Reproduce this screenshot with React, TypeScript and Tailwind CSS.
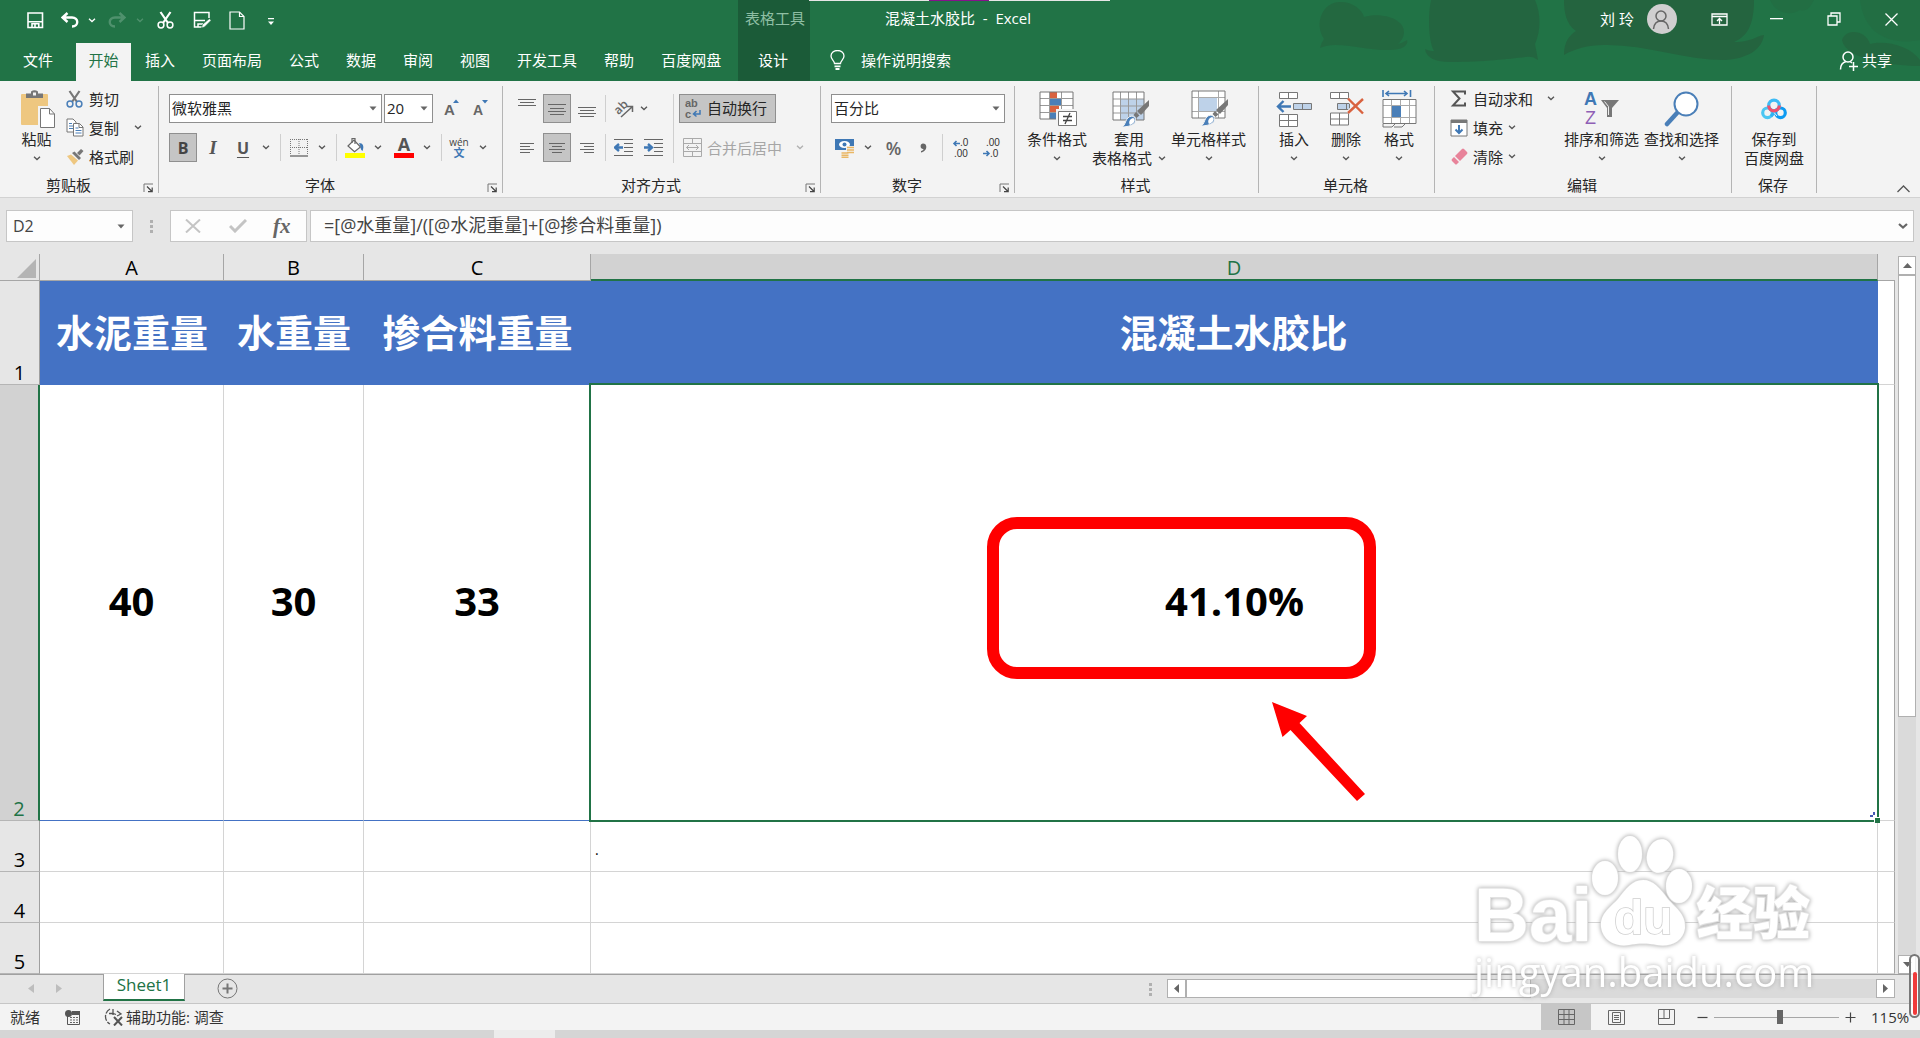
import React from "react";
import type { ReactNode } from "react";

/* ---------- small shared pieces ---------- */

function Chevron({ className = "text-[#555]" }: { className?: string }) {
  return (
    <svg width="8" height="5" viewBox="0 0 8 5" className={`shrink-0 ${className}`} aria-hidden="true">
      <path d="M1 .8 4 3.6 7 .8" fill="none" stroke="currentColor" strokeWidth="1.3" />
    </svg>
  );
}

function Caret({ className = "" }: { className?: string }) {
  return (
    <svg width="8" height="5" viewBox="0 0 8 5" className={`pointer-events-none shrink-0 text-[#666] ${className}`} aria-hidden="true">
      <path d="M.5 .5h7L4 4.5z" fill="currentColor" />
    </svg>
  );
}

function Sep({ className = "" }: { className?: string }) {
  return <span className={`h-[27px] w-px shrink-0 bg-[#cfcfcf] ${className}`} />;
}

function Launcher() {
  return (
    <button type="button" aria-label="更多选项" className="mr-1 self-end">
      <svg width="11" height="10" viewBox="0 0 11 10" aria-hidden="true">
        <path d="M1 9V1h9" fill="none" stroke="#777" />
        <path d="M4 3.5 8.5 8M5 8.7h4.2V4.5" fill="none" stroke="#444" strokeWidth="1.2" />
      </svg>
    </button>
  );
}

function Group({ label, width, launcher, children }: { label: string; width: string; launcher?: boolean; children: ReactNode }) {
  return (
    <section aria-label={label} className={`flex shrink-0 flex-col border-r border-[#b4b4b4] ${width}`}>
      <div className="h-[91px]">{children}</div>
      <div className="flex h-4 items-center">
        <span className={`flex-1 text-center leading-4 ${launcher ? "pr-[6px]" : "pr-[2px]"}`}>{label}</span>
        {launcher && <Launcher />}
      </div>
    </section>
  );
}

function BigButton({ icon, label, second, className = "", chevron = true }: { icon: ReactNode; label: string; second?: string; className?: string; chevron?: boolean }) {
  return (
    <button type="button" className={`flex flex-col items-center ${className}`}>
      <span className="flex h-[42px] items-center justify-center">{icon}</span>
      <span className="h-[19px] leading-[19px]">{label}</span>
      <span className="flex h-[19px] items-center gap-[6px] leading-[19px]">
        {second}
        {chevron && <Chevron />}
      </span>
    </button>
  );
}

function IconButton({ label, children, className = "" }: { label: string; children: ReactNode; className?: string }) {
  return (
    <button type="button" aria-label={label} className={`flex shrink-0 items-center justify-center ${className}`}>
      {children}
    </button>
  );
}

/* ---------- icons ---------- */

const SaveIcon = () => (
  <svg width="17" height="17" viewBox="0 0 17 17" fill="none" stroke="#fff" strokeWidth="1.600">
    <path d="M1 1h14.500v14.500H1zM1 9.800h14.500" />
    <path d="M5 15.500v-3.700h6.800v3.700M8 12v3" />
  </svg>
);

const UndoIcon = () => (
  <svg width="18" height="16" viewBox="0 0 18 16" fill="none" stroke="#fff" strokeWidth="2.400">
    <path d="M6.500 1 1.600 5.500l4.900 4.500M1.800 5.500h9.200c7 0 7 9 0 9" />
  </svg>
);

const RedoIcon = () => (
  <svg width="18" height="16" viewBox="0 0 18 16" fill="none" stroke="#4f916d" strokeWidth="2.400">
    <path d="m11.500 1 4.900 4.500-4.900 4.500M16.200 5.500H7c-7 0-7 9 0 9" />
  </svg>
);

const Scissors = ({ blade, ring }: { blade: string; ring: string }) => (
  <svg width="17" height="18" viewBox="0 0 17 18" fill="none" className="shrink-0">
    <path d="M3.500 1 11 12M13.500 1 6 12" stroke={blade} strokeWidth="2.200" />
    <circle cx="4" cy="14" r="2.900" stroke={ring} strokeWidth="1.500" />
    <circle cx="13" cy="14" r="2.900" stroke={ring} strokeWidth="1.500" />
  </svg>
);

const SaveEditIcon = () => (
  <svg width="19" height="19" viewBox="0 0 19 19" fill="none" stroke="#fff" strokeWidth="1.500">
    <path d="M9 16H1.500V1.500H16V7M2 9.500h10M5 16v-3h5" />
    <path d="m8.500 17 1-3.500 7-6 1.500 2-6.500 6.500z" fill="#fff" stroke="#217346" strokeWidth=".6" />
  </svg>
);

const PageIcon = () => (
  <svg width="16" height="19" viewBox="0 0 16 19" fill="none" stroke="#fff" strokeWidth="1.200">
    <path d="M1 1h9.500l4.500 4.500V18H1z" />
    <path d="M10.500 1v4.500H15" />
  </svg>
);

const PasteIcon = () => (
  <svg width="35" height="39" viewBox="0 0 35 39" fill="none">
    <rect y="4" width="27" height="31" rx="1" fill="#eec780" />
    <path d="M5 8V3.500h5V1.500Q13.500-1 17 1.500v2h5V8z" fill="#777" />
    <rect x="12" y="2.500" width="3" height="3" fill="#f3f3f3" />
    <path d="M18.500 17.500h10l5.500 6v14.500H18.500z" fill="#fff" stroke="#f3f3f3" strokeWidth="3" />
    <path d="M19.500 18.500h9l5 5.500v13.500h-14z" fill="#fff" stroke="#777" />
    <path d="M28.500 18.500V24h5" stroke="#777" />
  </svg>
);

const CopyIcon = () => (
  <svg width="18" height="19" viewBox="0 0 18 19" fill="none">
    <path d="M1 1h6l3 3v10H1z" fill="#fff" stroke="#777" />
    <path d="M3 5.500h3M3 8h4M3 10.500h4" stroke="#4a7fb8" />
    <path d="M7.500 5.500h6l3.500 3.500v9H7.500z" fill="#fff" stroke="#777" />
    <path d="M9.500 10h3M9.500 12.500h6M9.500 15h6" stroke="#4a7fb8" />
    <path d="M13 5.500V9.500h4" stroke="#777" />
  </svg>
);

const BrushIcon = () => (
  <svg width="18" height="18" viewBox="0 0 18 18">
    <path d="m1 8 4-1.500 7 6L8 17z" fill="#eec780" />
    <path d="m6 5 2.500-1.500L15 10l-2 2z" fill="#777" />
    <path d="m11 5 4-4 2.500 2-4 4.500z" fill="#777" />
  </svg>
);

const Lines = ({ rows }: { rows: [number, number][] }) => (
  <svg width="18" height="20" viewBox="0 0 18 20" stroke="#666" strokeWidth="1">
    {rows.map(([x, y]) => (
      <path key={y} d={`M${x} ${y}.500H${18 - x}`} />
    ))}
  </svg>
);

const SideLines = ({ right }: { right?: boolean }) => (
  <svg width="14" height="12" viewBox="0 0 14 12" stroke="#666">
    <path d={right ? "M0 1.500h14M4 4.500h10M0 7.500h14M4 10.500h10" : "M0 1.500h14M0 4.500h10M0 7.500h14M0 10.500h10"} />
  </svg>
);

const IndentIcon = ({ more }: { more?: boolean }) => (
  <svg width="19" height="17" viewBox="0 0 19 17" fill="none">
    <path d="M0 .5h19M10 4.500h9M10 8.500h9M10 12.500h9M0 16.500h19" stroke="#666" />
    <path d={more ? "M0 8.500h7M4 5l4 3.500L4 12" : "M9 8.500H2M5 5 1 8.500 5 12"} stroke="#3f78b5" strokeWidth="2.400" />
  </svg>
);

const BordersIcon = () => (
  <svg width="18" height="18" viewBox="0 0 18 18" stroke="#777" fill="none">
    <path d="M.5 0v16M9 0v16M17.500 0v16M0 .5h18M0 8.500h18" strokeDasharray="1 1" />
    <path d="M0 17h18" strokeWidth="1.500" />
  </svg>
);

const FillIcon = () => (
  <svg width="20" height="21" viewBox="0 0 20 21" fill="none">
    <path d="m3 9 6-6 6.500 7-6 4.800z" fill="#fff" stroke="#666" strokeWidth="1.200" />
    <path d="M7 6V1.500h3V7" stroke="#666" strokeWidth="1.200" />
    <path d="M14 6c4 0 5.500 3.500 3.500 8-2-1-2-3.500-2-4.500z" fill="#3f78b5" />
    <path d="M0 16h20v5H0z" fill="#ff0" />
  </svg>
);

const MergeIcon = () => (
  <svg width="19" height="19" viewBox="0 0 19 19" fill="none" stroke="#aaa">
    <path d="M.5 .5h18v18H.5zM.5 5.500h18M.5 13.500h18M9.500 .5v5M9.500 13.500v5" />
    <path d="M3.500 9.500h12M6 7 3.500 9.500 6 12M13 7l2.500 2.500L13 12" />
  </svg>
);

const MoneyIcon = () => (
  <svg width="20" height="20" viewBox="0 0 20 20" fill="none">
    <path d="M0 1h19v11H0z" fill="#3f78b5" />
    <ellipse cx="9.500" cy="6.500" rx="5.500" ry="3.500" fill="#fff" />
    <circle cx="9.500" cy="6.500" r="2" fill="#3f78b5" />
    <path d="M11 8h8v9h-4v3H6v-6h5z" fill="#f3f3f3" />
    <path d="M12 9.500h7M12 12h7M12 14.500h7M6.500 15h7M6.500 17.300h7M6.500 19.500h7" stroke="#eab765" strokeWidth="1.700" />
  </svg>
);

const DecimalIcon = ({ up }: { up?: boolean }) => (
  <svg width="17" height="20" viewBox="0 0 17 20" className="overflow-visible">
    <g fill="#333" fontFamily="Liberation Sans, sans-serif" fontSize="10">
      <text x={up ? 7 : 3} y="8">{up ? ".0" : ".00"}</text>
      <text x={up ? 1 : 7} y="19">{up ? ".00" : ".0"}</text>
    </g>
    <path d={up ? "M7 5.500H1M3.500 3 1 5.500 3.500 8" : "M0 15.500h6M3.500 13 6 15.500 3.500 18"} stroke="#3f78b5" strokeWidth="1.600" fill="none" />
  </svg>
);

const CondIcon = () => (
  <svg width="38" height="36" viewBox="0 0 38 36" fill="none" className="ml-[2px]">
    <path d="M1 1h33v27H1z" fill="#fff" />
    <path d="M11 1h7v6h-7zM11 15h9v6h-9z" fill="#d9623f" />
    <path d="M11 8h11v6H11zM11 22h6v6h-6z" fill="#4a7fb8" />
    <path d="M1 7.500h33M1 14.500h33M1 21.500h33M10.500 1v27M22.500 1v27" stroke="#999" />
    <path d="M1 1h33v27H1z" stroke="#777" />
    <path d="M17 18h21v17H17z" fill="#f3f3f3" />
    <path d="M19.500 20.500h18v14h-18z" fill="#fff" stroke="#777" />
    <path d="M24 25.500h9M24 29.500h9M31 22l-5 11" stroke="#444" strokeWidth="1.300" />
  </svg>
);

const BigBrush = () => (
  <g>
    <path d="M37 9v6l-8 9-4-4z" fill="#777" />
    <path d="m24 21 3.500 3.500-3 2.500-3-3z" fill="#777" />
    <path d="M9 36c6-1 3-10 11-11 6 2 6 11-11 11z" fill="#4a7fb8" stroke="#f3f3f3" />
    <path d="M18 34c-2-3 0-6 3-7 3 1 2 5-3 7z" fill="#fff" />
  </g>
);

const TableFmtIcon = () => (
  <svg width="38" height="37" viewBox="0 0 38 37" fill="none" className="ml-[4px]">
    <path d="M1 1h31v28H1z" fill="#fff" />
    <path d="M9 8h23v21H9z" fill="#bed2e9" />
    <path d="M1 8h31M1 15h31M1 22h31M8.500 1v28M16.500 1v28M24.500 1v28" stroke="#999" />
    <path d="M1 1h31v28H1z" stroke="#777" />
    <BigBrush />
  </svg>
);

const CellStyleIcon = () => (
  <svg width="38" height="38" viewBox="0 0 38 38" fill="none" className="ml-[2px]">
    <path d="M1 1h33v27H1z" fill="#fff" />
    <path d="M1 7.500h33M1 21.500h33M7.500 1v27M27.500 1v27" stroke="#aaa" />
    <path d="M8 8h18v13H8z" fill="#bed2e9" />
    <path d="M1 1h33v27H1z" stroke="#777" />
    <BigBrush />
  </svg>
);

const InsertIcon = () => (
  <svg width="36" height="36" viewBox="0 0 36 36" fill="none" stroke="#777">
    <path d="M3.500 1.500h18v6h-18zM12.500 1.500v6M3.500 23.500h18v12h-18zM12.500 23.500v12M3.500 29.500h18" fill="#fff" />
    <path d="M17.500 12.500h18v6h-18zM26.500 12.500v6" fill="#bed2e9" />
    <path d="M15 15.500H2M7.500 10 2 15.500l5.500 5.500" stroke="#3f78b5" strokeWidth="2.400" />
  </svg>
);

const DeleteIcon = () => (
  <svg width="36" height="36" viewBox="0 0 36 36" fill="none" stroke="#777" className="ml-[2px]">
    <path d="M1.500 1.500h18v6h-18zM10.500 1.500v6M1.500 22h18v12h-18zM10.500 22v12M1.500 28h18" fill="#fff" />
    <path d="M8.500 12.500h12v6h-12zM17.500 12.500v6" fill="#bed2e9" />
    <path d="m19 7.500 15 15M34 8 19 22" stroke="#f3f3f3" strokeWidth="5" />
    <path d="m19 7.500 15 15M34 8 19 22" stroke="#d9623f" strokeWidth="2.400" />
  </svg>
);

const FormatIcon = () => (
  <svg width="36" height="38" viewBox="0 0 36 38" fill="none" className="ml-[2px]">
    <path d="M1 0v7M28.500 0v7M4 3.500h21M7 1 4 3.500 7 6M22 1l3 2.500L22 6" stroke="#3f78b5" strokeWidth="1.600" />
    <path d="M1 9.500h33v24H1z" fill="#fff" />
    <path d="M1 15.500h33M1 27.500h33M9.500 9.500v24M18.500 9.500v24M27.500 9.500v24" stroke="#aaa" />
    <path d="M1 9.500h33v24H1z" stroke="#777" />
    <path d="M10 16h9v11h-9z" fill="#4a7fb8" />
    <path d="M1 34v3h9l3-3M12 37h8l3-3" stroke="#777" />
  </svg>
);

const SortIcon = () => (
  <svg width="36" height="36" viewBox="0 0 36 36" className="overflow-visible">
    <text x="0" y="14" fontFamily="Liberation Sans, sans-serif" fontWeight="700" fontSize="18" fill="#3f78b5">A</text>
    <text x="1" y="33" fontFamily="Liberation Sans, sans-serif" fontSize="18" fill="#8f5fb5">Z</text>
    <path d="M17 9h18l-7 8v9h-5v-9z" fill="#777" />
    <path d="m20.500 10.500 4 5V24" stroke="#eee" fill="none" />
  </svg>
);

const FindIcon = () => (
  <svg width="36" height="36" viewBox="0 0 36 36" fill="none" stroke="#4a7fb8">
    <path d="M13 22 3 33" strokeWidth="4.500" strokeLinecap="round" />
    <circle cx="22" cy="13" r="11.500" fill="#fff" strokeWidth="2" />
  </svg>
);

const CloudIcon = () => (
  <svg width="28" height="22" viewBox="0 0 28 22" fill="none" strokeWidth="3.200">
    <circle cx="7.500" cy="14.800" r="4.800" stroke="#4cc6f2" />
    <circle cx="20.500" cy="14.800" r="4.800" stroke="#0d9bf2" />
    <path d="m11 18.300 6-7" stroke="#2fb2f4" />
    <path d="m11.500 11.500 5.500 6.500" stroke="#f3f3f3" strokeWidth="1" />
    <circle cx="14" cy="7.500" r="5.300" stroke="#3dbbf5" />
    <path d="M8.700 7.500a5.300 5.300 0 0 0 10.600 0" stroke="#f0506c" />
  </svg>
);

const PersonIcon = ({ color, plus }: { color: string; plus?: boolean }) => (
  <svg width="20" height="21" viewBox="0 0 20 21" fill="none" stroke={color} strokeWidth="1.500">
    <circle cx="9" cy="7" r="5" />
    <path d={plus ? "M1.500 19.500c0-4 2-7 5.500-8M11 11.500l2 1.500" : "M1.500 20c.5-5 3-8 7.500-8s7 3 7.500 8"} />
    {plus && <path d="M14.500 12v9M10 16.500h9" />}
  </svg>
);

/* ---------- header ---------- */

const TABS = ["插入", "页面布局", "公式", "数据", "审阅", "视图", "开发工具", "帮助", "百度网盘"];

function Header() {
  return (
    <header className="relative flex h-[81px] overflow-hidden bg-[#217346] text-white">
      <svg className="absolute top-0 right-0" width="620" height="81" viewBox="0 0 620 81" fill="#24643f" aria-hidden="true">
        <path d="M20 48q1-5 4-9C14 24 22 2 40 2c14 0 22 8 24 15 16-5 40 1 40 15 0 6-4 10-6 12q4-1 9-4c2 6-6 10-18 10-29 0-53-10-69-2z" opacity=".75" />
        <path d="M131 0h104c6 14 6 30 0 44l3 16c-4-3-8-4-12-3-20 2-40 5-76 5-14 0-24-4-25-13 4 2 7 2 9 2-6-11-6-37-3-51z" opacity=".9" />
        <path d="M264 0h190c0 24-6 36-20 42 18 0 22-6 30-7-2 14-16 24-40 25-40 0-80-16-120-15-16 0-30 4-40 10 0-14 6-20 12-24-10-7-12-19-12-31z" />
        <path d="M542 40c4-12 24-10 28 4 16-4 40 2 50 16v6c-25 0-75-6-78-26z" opacity=".8" />
        <path d="M470 0h44c-4 8-8 12-14 10-8 6-24 4-30-10zM560 0h60v40c-30 6-56-6-60-40z" opacity=".3" />
      </svg>
      <div className="absolute top-0 left-[809px] flex h-px">
        <span className="w-[120px] bg-[#e6e6e6]" />
        <span className="w-[60px] bg-[#85128b]" />
        <span className="w-[121px] bg-[#e6e6e6]" />
      </div>

      <div className="flex w-[738px] shrink-0 flex-col">
        <div className="flex h-[40px] items-center pl-[27px]">
          <IconButton label="保存"><SaveIcon /></IconButton>
          <IconButton label="撤消" className="ml-[17px]"><UndoIcon /></IconButton>
          <IconButton label="撤消列表" className="ml-[9px]"><Chevron className="text-white" /></IconButton>
          <IconButton label="恢复" className="ml-[12px]"><RedoIcon /></IconButton>
          <IconButton label="恢复列表" className="ml-[10px]"><Chevron className="text-[#4f916d]" /></IconButton>
          <IconButton label="剪切" className="ml-[13px]"><Scissors blade="#fff" ring="#fff" /></IconButton>
          <IconButton label="另存为" className="ml-[19px]"><SaveEditIcon /></IconButton>
          <IconButton label="新建" className="ml-[17px]"><PageIcon /></IconButton>
          <IconButton label="自定义快速访问工具栏" className="ml-[23px]">
            <svg width="6" height="8" viewBox="0 0 6 8" className="mt-1" fill="#fff"><path d="M0 0h6v1.300H0zM0 3.500h6L3 7z" /></svg>
          </IconButton>
        </div>
        <nav className="mt-[3px] flex h-[38px]">
          <button type="button" className="w-[76px] pb-1">文件</button>
          <button type="button" className="w-[55px] bg-[#f3f3f3] pb-1 text-[#217346]">开始</button>
          <div className="ml-[14px] flex gap-[27px] pb-1">
            {TABS.map((t) => (
              <button type="button" key={t}>{t}</button>
            ))}
          </div>
        </nav>
      </div>

      <div className="flex w-[72px] shrink-0 flex-col bg-[#1b5b38]">
        <span className="pl-[7px] leading-[36px] text-[#8fbfa4]">表格工具</span>
        <button type="button" className="mt-[7px] h-[38px] pr-[2px] pb-1">设计</button>
      </div>

      <div className="relative flex min-w-0 flex-1 flex-col">
        <div className="flex h-[38px] items-center pl-[75px]">
          <h1 className="pb-[2px] whitespace-pre">混凝土水胶比  -  Excel</h1>
          <div className="ml-auto flex items-center">
            <span>刘 玲</span>
            <button type="button" aria-label="帐户" className="ml-[13px] flex h-[30px] w-[30px] items-center justify-center rounded-full bg-[#d0cfd0]">
              <PersonIcon color="#666" />
            </button>
            <IconButton label="功能区显示选项" className="ml-[34px]">
              <svg width="17" height="13" viewBox="0 0 17 13" fill="none" stroke="#fff" strokeWidth="1.300"><path d="M1 1h15v11H1zM1 3.500h15M8.500 11V5.500M6 8l2.500-2.500L11 8" /></svg>
            </IconButton>
            <IconButton label="最小化" className="ml-[42px]">
              <svg width="13" height="2" viewBox="0 0 13 2"><path d="M0 0h13v1.300H0z" fill="#fff" /></svg>
            </IconButton>
            <IconButton label="向下还原" className="ml-[44px]">
              <svg width="14" height="14" viewBox="0 0 14 14" fill="none" stroke="#fff" strokeWidth="1.300"><path d="M1 4h9v9H1zM4 4V1h9v9h-3" /></svg>
            </IconButton>
            <IconButton label="关闭" className="mr-[22px] ml-[44px]">
              <svg width="13" height="13" viewBox="0 0 13 13" stroke="#fff" strokeWidth="1.300"><path d="m.5 .5 12 12M12.500 .5l-12 12" /></svg>
            </IconButton>
          </div>
        </div>
        <div className="flex h-[43px] items-center pt-px pl-[20px]">
          <svg width="15" height="20" viewBox="0 0 15 20" fill="none" stroke="#fff" strokeWidth="1.300" aria-hidden="true">
            <path d="M4.500 13.500C4.500 11 1 9.500 1 6a6.500 5.500 0 0 1 13 0c0 3.500-3.500 5-3.500 7.500z" />
            <path d="M4.500 16.300h6M5.500 19h4" strokeWidth="1.800" />
          </svg>
          <input aria-label="操作说明搜索" placeholder="操作说明搜索" className="ml-4 w-40 bg-transparent outline-none placeholder:text-white" />
          <button type="button" className="mr-[28px] ml-auto flex items-center gap-[3px]">
            <PersonIcon color="#fff" plus />
            共享
          </button>
        </div>
      </div>
    </header>
  );
}

/* ---------- ribbon ---------- */

function Ribbon() {
  return (
    <div className="flex h-[117px] border-b border-[#d2d2d2] bg-[#f3f3f3] pt-[5px] pb-1 text-[#262626]">
      <Group label="剪贴板" width="w-[159px]" launcher>
        <div className="flex">
          <div className="w-[60px] pt-[2px] pl-[13px]">
            <BigButton icon={<span className="pl-[4px]"><PasteIcon /></span>} label="粘贴" className="w-[47px]" />
          </div>
          <div className="flex flex-col pl-[6px]">
            <button type="button" className="flex h-[25px] items-center gap-[6px]"><Scissors blade="#777" ring="#4a7fb8" />剪切</button>
            <div className="mt-[2px] flex h-[29px] items-center">
              <button type="button" className="flex items-center gap-[5px]"><CopyIcon />复制</button>
              <IconButton label="复制选项" className="ml-[15px]"><Chevron /></IconButton>
            </div>
            <button type="button" className="flex h-[29px] items-center gap-[5px]"><BrushIcon />格式刷</button>
          </div>
        </div>
      </Group>

      <Group label="字体" width="w-[344px]" launcher>
        <div className="flex flex-col gap-[10px] pt-2 pl-[10px]">
          <div className="flex h-[29px] items-center">
            <div className="relative">
              <select aria-label="字体名称" className="h-[29px] w-[213px] appearance-none border border-[#8f8f8f] bg-white pb-[2px] pl-[2px]"><option>微软雅黑</option></select>
              <Caret className="absolute top-3 right-[5px]" />
            </div>
            <div className="relative ml-[2px]">
              <select aria-label="字号" className="h-[29px] w-[49px] appearance-none border border-[#8f8f8f] bg-white pb-[2px] pl-[2px]"><option>20</option></select>
              <Caret className="absolute top-3 right-[5px]" />
            </div>
            <IconButton label="增大字号" className="ml-[11px]">
              <svg width="16" height="20" viewBox="0 0 16 20" className="overflow-visible"><text x="0" y="16" fontFamily="Liberation Sans, sans-serif" fontWeight="700" fontSize="15" fill="#666">A</text><path d="m9 4 3-3.500L15 4z" fill="#3f78b5" /></svg>
            </IconButton>
            <IconButton label="减小字号" className="ml-[13px]">
              <svg width="16" height="20" viewBox="0 0 16 20" className="overflow-visible"><text x="0" y="16" fontFamily="Liberation Sans, sans-serif" fontWeight="700" fontSize="14" fill="#666">A</text><path d="m9 1 3 3.500L15 1z" fill="#3f78b5" /></svg>
            </IconButton>
          </div>
          <div className="flex h-[29px] items-center">
            <button type="button" aria-pressed="true" aria-label="加粗" className="h-[29px] w-[28px] border border-[#8f8f8f] bg-[#c5c5c5] text-[16px] font-bold text-[#444]">B</button>
            <button type="button" aria-label="倾斜" className="w-[32px] font-['Liberation_Serif'] text-[19px] font-bold text-[#555] italic">I</button>
            <button type="button" aria-label="下划线" className="w-[28px] text-[16px] font-bold text-[#555] underline underline-offset-[3px]">U</button>
            <IconButton label="下划线选项" className="ml-[5px]"><Chevron /></IconButton>
            <Sep className="mr-[9px] ml-[10px]" />
            <IconButton label="边框"><BordersIcon /></IconButton>
            <IconButton label="边框选项" className="ml-[10px]"><Chevron /></IconButton>
            <Sep className="mr-[8px] ml-[10px]" />
            <IconButton label="填充颜色"><FillIcon /></IconButton>
            <IconButton label="填充颜色选项" className="ml-[9px]"><Chevron /></IconButton>
            <button type="button" aria-label="字体颜色" className="ml-[12px] flex h-[21px] w-[20px] flex-col items-center border-b-[5px] border-[#f00] text-[18px] leading-[14px] font-bold text-[#555]">A</button>
            <IconButton label="字体颜色选项" className="ml-[9px]"><Chevron /></IconButton>
            <Sep className="mr-[8px] ml-[10px]" />
            <button type="button" aria-label="拼音指南" className="flex w-[18px] flex-col items-center text-[10px] leading-[9px] text-[#444]">
              <span>wén</span>
              <span className="text-[11px] leading-[11px] font-bold text-[#3f78b5]">文</span>
            </button>
            <IconButton label="拼音选项" className="ml-[11px]"><Chevron /></IconButton>
          </div>
        </div>
      </Group>

      <Group label="对齐方式" width="w-[318px]" launcher>
        <div className="flex pt-2 pl-[10px]">
          <div className="flex flex-col gap-[10px]">
            <div className="flex h-[29px] items-center">
              <IconButton label="顶端对齐" className="w-[28px] pb-3"><Lines rows={[[0, 6], [2, 9], [0, 12]]} /></IconButton>
              <span className="w-[2px]" />
              <button type="button" aria-pressed="true" aria-label="垂直居中" className="flex h-[29px] w-[28px] items-center justify-center border border-[#8f8f8f] bg-[#c5c5c5]"><Lines rows={[[0, 5], [2, 9], [0, 12], [2, 15]]} /></button>
              <IconButton label="底端对齐" className="w-[32px]"><Lines rows={[[0, 8], [2, 11], [0, 14], [2, 17]]} /></IconButton>
              <Sep className="mr-[8px] ml-[2px]" />
              <IconButton label="方向">
                <svg width="20" height="20" viewBox="0 0 20 20" className="overflow-visible"><text x="2" y="14" transform="rotate(-45 6 12)" fontFamily="Open Sans, sans-serif" fontWeight="600" fontSize="12" fill="#666">ab</text><path d="M7 18 18 8M13 7.500h5.500V13" fill="none" stroke="#666" strokeWidth="1.500" /></svg>
              </IconButton>
              <IconButton label="方向选项" className="ml-[6px]"><Chevron /></IconButton>
            </div>
            <div className="flex h-[29px] items-center">
              <IconButton label="左对齐" className="w-[28px]"><SideLines /></IconButton>
              <span className="w-[2px]" />
              <button type="button" aria-pressed="true" aria-label="居中" className="flex h-[29px] w-[28px] items-center justify-center border border-[#8f8f8f] bg-[#c5c5c5]"><Lines rows={[[1, 5], [4, 8], [1, 11], [4, 14]]} /></button>
              <IconButton label="右对齐" className="w-[32px]"><SideLines right /></IconButton>
              <Sep className="mr-[8px] ml-[2px]" />
              <IconButton label="减少缩进量"><IndentIcon /></IconButton>
              <IconButton label="增加缩进量" className="ml-[11px]"><IndentIcon more /></IconButton>
            </div>
          </div>
          <span className="mr-[5px] ml-[10px] h-[69px] w-px bg-[#cfcfcf]" />
          <div className="flex flex-col gap-[10px]">
            <button type="button" aria-pressed="true" className="flex h-[29px] w-[97px] items-center gap-[5px] border border-[#8f8f8f] bg-[#c5c5c5] pb-px pl-[5px]">
              <svg width="17" height="19" viewBox="0 0 17 19" className="overflow-visible" aria-hidden="true">
                <g fontFamily="Liberation Sans, sans-serif" fontWeight="700" fontSize="11" fill="#666"><text x="0" y="8">ab</text><text x="0" y="19">c</text></g>
                <path d="M15 11v4H9M11.500 12 8.500 15l3 2.500" fill="none" stroke="#3f78b5" strokeWidth="1.500" />
              </svg>
              自动换行
            </button>
            <div className="flex h-[29px] items-center pl-[4px] text-[#a6a6a6]">
              <button type="button" disabled className="flex items-center gap-[5px]"><MergeIcon />合并后居中</button>
              <IconButton label="合并选项" className="ml-[14px]"><Chevron className="text-[#b0b0b0]" /></IconButton>
            </div>
          </div>
        </div>
      </Group>

      <Group label="数字" width="w-[194px]" launcher>
        <div className="flex flex-col gap-[10px] pt-2 pl-[10px]">
          <div className="relative w-[174px]">
            <select aria-label="数字格式" className="block h-[29px] w-[174px] appearance-none border border-[#8f8f8f] bg-white pb-[2px] pl-[2px]"><option>百分比</option></select>
            <Caret className="absolute top-3 right-[5px]" />
          </div>
          <div className="flex h-[29px] items-center pl-[4px]">
            <IconButton label="会计数字格式"><MoneyIcon /></IconButton>
            <IconButton label="会计选项" className="ml-[9px]"><Chevron /></IconButton>
            <button type="button" className="ml-[13px] w-[17px] text-[18px] font-semibold text-[#666]">%</button>
            <IconButton label="千位分隔" className="ml-[18px]">
              <svg width="7" height="10" viewBox="0 0 7 10" fill="#666"><path d="M3 .5c2 0 3.300 1.200 3.300 3.300C6.300 7 4 9 1 9.500V8c1.500-.3 2.300-1 2.500-2C2 6.300.6 5.200.6 3.300.6 1.500 1.700.5 3 .5z" /></svg>
            </IconButton>
            <Sep className="mr-[10px] ml-[15px]" />
            <IconButton label="增加小数位数"><DecimalIcon up /></IconButton>
            <IconButton label="减少小数位数" className="ml-[13px]"><DecimalIcon /></IconButton>
          </div>
        </div>
      </Group>

      <Group label="样式" width="w-[244px]">
        <div className="flex pt-[2px] pl-[12px]">
          <BigButton icon={<CondIcon />} label="条件格式" />
          <BigButton icon={<TableFmtIcon />} label="套用" second="表格格式" className="ml-[4px] w-[76px]" />
          <BigButton icon={<CellStyleIcon />} label="单元格样式" className="ml-[4px]" />
        </div>
      </Group>

      <Group label="单元格" width="w-[176px]">
        <div className="flex gap-[15px] pt-[2px] pl-[17px]">
          <BigButton icon={<InsertIcon />} label="插入" />
          <BigButton icon={<DeleteIcon />} label="删除" />
          <BigButton icon={<FormatIcon />} label="格式" />
        </div>
      </Group>

      <Group label="编辑" width="w-[297px]">
        <div className="flex">
          <div className="w-[114px] shrink-0 pl-[15px]">
            <div className="flex h-[25px] items-center">
              <button type="button" className="flex items-center gap-[5px]">
                <svg width="18" height="17" viewBox="0 0 18 17" aria-hidden="true"><path d="M15 4.500V1.500H3L9.500 8.500 3 15.500h12v-3" fill="none" stroke="#555" strokeWidth="2" /></svg>
                自动求和
              </button>
              <IconButton label="求和选项" className="ml-[14px]"><Chevron /></IconButton>
            </div>
            <button type="button" className="mt-[2px] flex h-[29px] items-center gap-[5px]">
              <svg width="18" height="18" viewBox="0 0 18 18" aria-hidden="true"><path d="M1 1h16v16H1z" fill="#fff" stroke="#777" /><path d="M1 1h16v3H1z" fill="#777" /><path d="M9 6v8M5.500 10.500 9 14l3.500-3.500" fill="none" stroke="#3f78b5" strokeWidth="2" /></svg>
              填充
              <Chevron />
            </button>
            <button type="button" className="flex h-[29px] items-center gap-[5px]">
              <svg width="18" height="17" viewBox="0 0 18 17" aria-hidden="true"><path d="m5 8 7-7q1-1 2 0l3 3q1 1 0 2l-7 7z" fill="#e8839a" /><path d="m4 9 5 5-2 2q-1 1-2 0l-3-3q-1-1 0-2z" fill="#e8839a" /></svg>
              清除
              <Chevron />
            </button>
          </div>
          <div className="flex gap-[5px] pt-[2px] pl-[15px]">
            <BigButton icon={<SortIcon />} label="排序和筛选" />
            <BigButton icon={<FindIcon />} label="查找和选择" />
          </div>
        </div>
      </Group>

      <Group label="保存" width="w-[85px]">
        <div className="flex justify-center pt-[2px]">
          <BigButton icon={<CloudIcon />} label="保存到" second="百度网盘" chevron={false} />
        </div>
      </Group>

      <div className="flex flex-1 items-end justify-end pr-[10px]">
        <IconButton label="折叠功能区">
          <svg width="13" height="8" viewBox="0 0 13 8"><path d="m.5 7 6-6 6 6" fill="none" stroke="#555" strokeWidth="1.300" /></svg>
        </IconButton>
      </div>
    </div>
  );
}

/* ---------- formula bar ---------- */

const Dots = () => (
  <svg width="3" height="13" viewBox="0 0 3 13" fill="#b0b0b0" aria-hidden="true"><path d="M0 0h3v3H0zM0 5h3v3H0zM0 10h3v3H0z" /></svg>
);

function FormulaBar() {
  return (
    <div className="flex h-[56px] items-start bg-[#e6e6e6] px-[6px] pt-3 text-[#444]">
      <div className="flex h-[32px] w-[127px] items-center border border-[#c6c6c6] bg-[#fdfdfd] pr-[7px] pl-[6px]">
        <input aria-label="名称框" defaultValue="D2" className="w-0 flex-1 bg-transparent text-[16px] outline-none" />
        <Caret />
      </div>
      <div className="flex h-[32px] w-[37px] items-center justify-center"><Dots /></div>
      <div className="flex h-[32px] w-[137px] items-center border border-[#c6c6c6] bg-[#fdfdfd] pl-[14px]">
        <IconButton label="取消"><svg width="16" height="14" viewBox="0 0 16 14" stroke="#c4c4c4" strokeWidth="2"><path d="m1 .5 14 13M15 .5 1 13.500" /></svg></IconButton>
        <IconButton label="输入" className="ml-[28px]"><svg width="18" height="14" viewBox="0 0 18 14" fill="none" stroke="#c4c4c4" strokeWidth="3"><path d="m1 7 5 5L17 1" /></svg></IconButton>
        <button type="button" aria-label="插入函数" className="ml-[26px] font-['Liberation_Serif'] text-[21px] leading-6 font-bold text-[#666] italic">fx</button>
      </div>
      <div className="ml-[3px] flex h-[32px] min-w-0 flex-1 items-center border border-[#c6c6c6] bg-[#fdfdfd] pr-[5px] pl-[13px]">
        <input aria-label="编辑栏" defaultValue="=[@水重量]/([@水泥重量]+[@掺合料重量])" className="min-w-0 flex-1 bg-transparent pb-[2px] text-[18px] leading-6 outline-none" />
        <IconButton label="展开编辑栏"><svg width="10" height="6" viewBox="0 0 10 6" fill="none" stroke="#666" strokeWidth="2.200"><path d="m1 1 4 3.500L9 1" /></svg></IconButton>
      </div>
    </div>
  );
}

/* ---------- sheet ---------- */

function RowHead({ n, active }: { n: number; active?: boolean }) {
  return (
    <th
      scope="row"
      className={`border-b border-b-[#b5b5b5] p-0 text-center align-bottom text-[20px] leading-[23px] font-normal ${
        active ? "border-r-2 border-r-[#217346] bg-[#d2d2d2] text-[#217346]" : "border-r border-r-[#9f9f9f] bg-[#e6e6e6] text-black"
      }`}
    >
      {n}
    </th>
  );
}

const LETTERS = ["A", "B", "C"];
const TITLES = ["水泥重量", "水重量", "掺合料重量"];
const VALUES = ["40", "30", "33"];

function Sheet() {
  return (
    <div className="relative flex bg-[#e6e6e6]">
      <table className="min-w-0 flex-1 table-fixed border-separate border-spacing-0 bg-white">
        <colgroup>
          <col className="w-[40px]" />
          <col className="w-[184px]" />
          <col className="w-[140px]" />
          <col className="w-[227px]" />
          <col />
          <col className="w-[17px]" />
        </colgroup>
        <thead>
          <tr className="h-[27px] bg-[#e6e6e6]">
            <td className="border-r border-b border-[#a6a6a6] p-0">
              <svg width="19" height="19" viewBox="0 0 19 19" className="mt-[2px] ml-[17px]" aria-hidden="true"><path d="M19 0v19H0z" fill="#b4b4b4" /></svg>
            </td>
            {LETTERS.map((l) => (
              <th key={l} scope="col" className="border-r border-b border-[#a6a6a6] p-0 pt-[2px] text-[20px] leading-6 font-normal text-black">{l}</th>
            ))}
            <th scope="col" className="border-r border-b-2 border-r-[#a6a6a6] border-b-[#217346] bg-[#d2d2d2] p-0 pt-[2px] text-[20px] leading-[23px] font-normal text-[#217346]">D</th>
            <td className="border-b border-[#a6a6a6]" />
          </tr>
        </thead>
        <tbody>
          <tr className="h-[104px]">
            <RowHead n={1} />
            {TITLES.map((t) => (
              <td key={t} className="bg-[#4472c4] p-0 pb-[2px] text-center text-[38px] leading-[50px] font-bold text-white">{t}</td>
            ))}
            <td className="bg-[#4472c4] p-0 pr-[2px] pb-[2px] text-center text-[38px] leading-[50px] font-bold text-white">混凝土水胶比</td>
            <td className="border-r border-b border-r-[#a6a6a6] border-b-[#d4d4d4]" />
          </tr>
          <tr className="h-[436px]">
            <RowHead n={2} active />
            {VALUES.map((v) => (
              <td key={v} className="border-r border-b border-r-[#d4d4d4] border-b-[#4472c4] p-0 pb-1 text-center text-[40px] leading-[50px] font-bold text-black">{v}</td>
            ))}
            <td className="relative p-0 pb-1 text-center text-[40px] leading-[50px] font-bold text-black">
              41.10%
              <div className="pointer-events-none absolute -top-[2px] -right-px -bottom-px -left-[2px] border-2 border-[#217346]" />
              <svg className="absolute -right-[2px] -bottom-[2px]" width="10" height="11" viewBox="0 0 10 11" aria-hidden="true">
                <path d="M4 5h6v6H4z" fill="#fff" />
                <path d="M5 6h5v5H5z" fill="#217346" />
                <path d="M0 3h3v2H0zM3 0h2v3H3z" fill="#4558b5" />
              </svg>
              <div className="absolute top-[132px] left-[396px] h-[162px] w-[389px] rounded-[30px] border-[12px] border-[#f00]" />
              <svg className="absolute top-[317px] left-[681px]" width="94" height="100" viewBox="0 0 94 100" aria-hidden="true">
                <path d="m0 0 35 14-7.500 7L93 92l-8 7L18.500 28 10.500 35z" fill="#f00" />
              </svg>
            </td>
            <td className="border-r border-b border-r-[#a6a6a6] border-b-[#d4d4d4]" />
          </tr>
          {[3, 4, 5].map((n) => (
            <tr key={n} className="h-[51px]">
              <RowHead n={n} />
              <td className="border-r border-b border-[#d4d4d4]" />
              <td className="border-r border-b border-[#d4d4d4]" />
              <td className="border-r border-b border-[#d4d4d4]" />
              <td className="border-r border-b border-[#d4d4d4] p-0 pt-2 pl-1 text-[14px] leading-4 text-black">{n === 3 ? "." : ""}</td>
              <td className="border-r border-b border-r-[#a6a6a6] border-b-[#d4d4d4]" />
            </tr>
          ))}
        </tbody>
      </table>
      <div className="flex w-[25px] shrink-0 flex-col pt-[2px] pr-[4px] pl-[3px]">
        <button type="button" aria-label="向上滚动" className="flex h-[19px] items-center justify-center border border-[#b0b0b0] bg-white">
          <svg width="9" height="5" viewBox="0 0 9 5"><path d="m0 5 4.500-5L9 5z" fill="#666" /></svg>
        </button>
        <div className="flex-1 bg-[#dadada]">
          <div className="h-[442px] border border-[#b0b0b0] bg-white" />
        </div>
        <button type="button" aria-label="向下滚动" className="flex h-[19px] items-center justify-center border border-[#b0b0b0] bg-white">
          <svg width="9" height="5" viewBox="0 0 9 5"><path d="m0 0 4.500 5L9 0z" fill="#666" /></svg>
        </button>
      </div>
    </div>
  );
}

/* ---------- bottom bars ---------- */

function SheetTabs() {
  return (
    <div className="flex h-[30px] items-start border-t border-b border-t-[#a0a0a0] border-b-[#c6c6c6] bg-[#e6e6e6]">
      <div className="flex h-[26px] w-[103px] items-center pl-[28px]">
        <IconButton label="上一张"><svg width="6" height="9" viewBox="0 0 6 9"><path d="M6 0v9L0 4.500z" fill="#bdbdbd" /></svg></IconButton>
        <IconButton label="下一张" className="ml-[22px]"><svg width="6" height="9" viewBox="0 0 6 9"><path d="M0 0v9l6-4.500z" fill="#bdbdbd" /></svg></IconButton>
      </div>
      <button type="button" className="-mt-px h-[27px] w-[82px] border-x border-b-2 border-x-[#a0a0a0] border-b-[#217346] bg-white pb-1 text-[17px] leading-5 text-[#217346]">Sheet1</button>
      <button type="button" aria-label="新工作表" className="mt-[3px] ml-[32px]">
        <svg width="21" height="21" viewBox="0 0 21 21" fill="none" stroke="#777"><circle cx="10.500" cy="10.500" r="9.500" /><path d="M10.500 5.500v10M5.500 10.500h10" strokeWidth="2" /></svg>
      </button>
      <div className="ml-auto flex h-7 items-center"><Dots /></div>
      <div className="mt-1 mr-[25px] ml-[15px] flex h-[19px] w-[728px]">
        <button type="button" aria-label="向左滚动" className="flex w-[19px] items-center justify-center border border-[#b0b0b0] bg-white">
          <svg width="5" height="9" viewBox="0 0 5 9"><path d="M5 0v9L0 4.500z" fill="#666" /></svg>
        </button>
        <div className="flex-1 bg-[#dadada]"><div className="h-full w-[345px] border border-[#b0b0b0] bg-white" /></div>
        <button type="button" aria-label="向右滚动" className="flex w-[19px] items-center justify-center border border-[#b0b0b0] bg-white">
          <svg width="5" height="9" viewBox="0 0 5 9"><path d="M0 0v9l5-4.500z" fill="#666" /></svg>
        </button>
      </div>
    </div>
  );
}

function StatusBar() {
  return (
    <footer className="flex h-[26px] items-center bg-[#f3f3f3] pl-[10px] text-[#333]">
      <span>就绪</span>
      <IconButton label="宏录制" className="ml-[25px]">
        <svg width="15" height="15" viewBox="0 0 15 15" fill="none"><path d="M2.500 4v10.500h12V3" stroke="#555" /><path d="M7 1h8v4H7z" fill="#555" /><circle cx="3.500" cy="3.500" r="3.500" fill="#555" /><path d="M5 7.500h8M5 10h8M5 12.500h8" stroke="#666" strokeDasharray="2 1" /></svg>
      </IconButton>
      <button type="button" className="ml-[24px] flex items-center gap-[2px]">
        <svg width="20" height="18" viewBox="0 0 20 18" fill="none" stroke="#555" strokeWidth="1.300" aria-hidden="true"><path d="M6 1C0 4 0 13 6 16" strokeDasharray="6 1.500" /><path d="M9 1v6M5 5.500h4l3 1M13 3l4 3-4 2" /><path d="m10 9 8 8.500M18 9l-8 8.500" strokeWidth="2" /></svg>
        辅助功能: 调查
      </button>
      <div className="ml-auto flex h-full items-center">
        <IconButton label="普通" className="h-full w-[50px] bg-[#c6c6c6]"><svg width="17" height="16" viewBox="0 0 17 16" fill="none" stroke="#666"><path d="M.5 .5h16v15H.5zM.5 5.500h16M.5 10.500h16M6 .5v15M11 .5v15" /></svg></IconButton>
        <IconButton label="页面布局" className="w-[50px]"><svg width="17" height="15" viewBox="0 0 17 15" fill="none" stroke="#666"><path d="M.5 .5h16v14H.5zM4.500 2.500h8v10h-8zM6 5.500h5M6 7.500h5M6 9.500h5" /></svg></IconButton>
        <IconButton label="分页预览" className="w-[50px]"><svg width="17" height="16" viewBox="0 0 17 16" fill="none" stroke="#666"><path d="M.5 .5h16v15H.5zM.5 9.500h11v-9M6 .5v9" /></svg></IconButton>
        <IconButton label="缩小" className="ml-[6px]"><svg width="11" height="11" viewBox="0 0 11 11" stroke="#444" strokeWidth="1.200"><path d="M.5 5.500h10" /></svg></IconButton>
        <input
          type="range"
          aria-label="缩放"
          min="0"
          max="100"
          defaultValue="53"
          className="mx-[6px] h-4 w-[125px] appearance-none bg-transparent [&::-webkit-slider-runnable-track]:h-px [&::-webkit-slider-runnable-track]:bg-[#a6a6a6] [&::-webkit-slider-thumb]:-mt-[7px] [&::-webkit-slider-thumb]:h-[14px] [&::-webkit-slider-thumb]:w-[6px] [&::-webkit-slider-thumb]:appearance-none [&::-webkit-slider-thumb]:bg-[#666]"
        />
        <IconButton label="放大"><svg width="11" height="11" viewBox="0 0 11 11" stroke="#444" strokeWidth="1.200"><path d="M.5 5.500h10M5.500 .5v10" /></svg></IconButton>
        <button type="button" className="mr-[10px] ml-[15px] w-[39px] text-left">115%</button>
      </div>
    </footer>
  );
}

function Watermark() {
  return (
    <div className="pointer-events-none absolute right-[100px] bottom-[43px] w-[346px] text-white [paint-order:stroke_fill] drop-shadow-[0_0_2px_#aaa]">
      <div className="flex items-end leading-none font-bold">
        <span className="font-['Liberation_Sans'] text-[76px] leading-[76px] [-webkit-text-stroke:2px_#e2e2e2]">Bai</span>
        <svg width="104" height="114" viewBox="0 0 104 114" className="mb-1 shrink-0" fill="#fff" stroke="#dcdcdc" strokeWidth="1.500" aria-hidden="true">
          <ellipse cx="13" cy="43" rx="13" ry="17" />
          <ellipse cx="38" cy="19" rx="12" ry="18" />
          <ellipse cx="68" cy="21" rx="13" ry="17" transform="rotate(12 68 21)" />
          <ellipse cx="87" cy="51" rx="13" ry="17" />
          <path d="M51 45c10 0 17 8 24 18 7 9 19 15 18 30-2 15-16 19-28 17-9-2-19-2-28 0-12 2-26-3-28-18-1-14 10-20 17-28 8-10 14-19 25-19z" />
          <text x="22" y="99" fontFamily="Liberation Sans, sans-serif" fontWeight="700" fontSize="48" fill="#fff" stroke="#cfcfcf" strokeWidth="1.500">du</text>
        </svg>
        <span className="mb-2 text-[57px] leading-[66px] font-black [-webkit-text-stroke:2px_#e2e2e2]">经验</span>
      </div>
      <div className="-mt-1 text-[40px] leading-[46px]">jingyan.baidu.com</div>
    </div>
  );
}

export default function App() {
  return (
    <div className="relative flex min-h-screen flex-col overflow-hidden bg-[#d5d5d5] font-['Open_Sans','Noto_Sans_CJK_SC',sans-serif] text-[15px] leading-5 whitespace-nowrap">
      <Header />
      <Ribbon />
      <FormulaBar />
      <Sheet />
      <SheetTabs />
      <StatusBar />
      <div className="flex h-2"><span className="ml-[494px] w-[61px] bg-[#ececec]" /></div>
      <Watermark />
      <div className="pointer-events-none absolute right-0 bottom-[20px] flex h-[64px] w-[11px] items-end justify-center rounded-full border-2 border-[#777] bg-white/80 pb-px">
        <span className="h-[43px] w-[4px] rounded-full bg-[#f03a3a]" />
      </div>
    </div>
  );
}
